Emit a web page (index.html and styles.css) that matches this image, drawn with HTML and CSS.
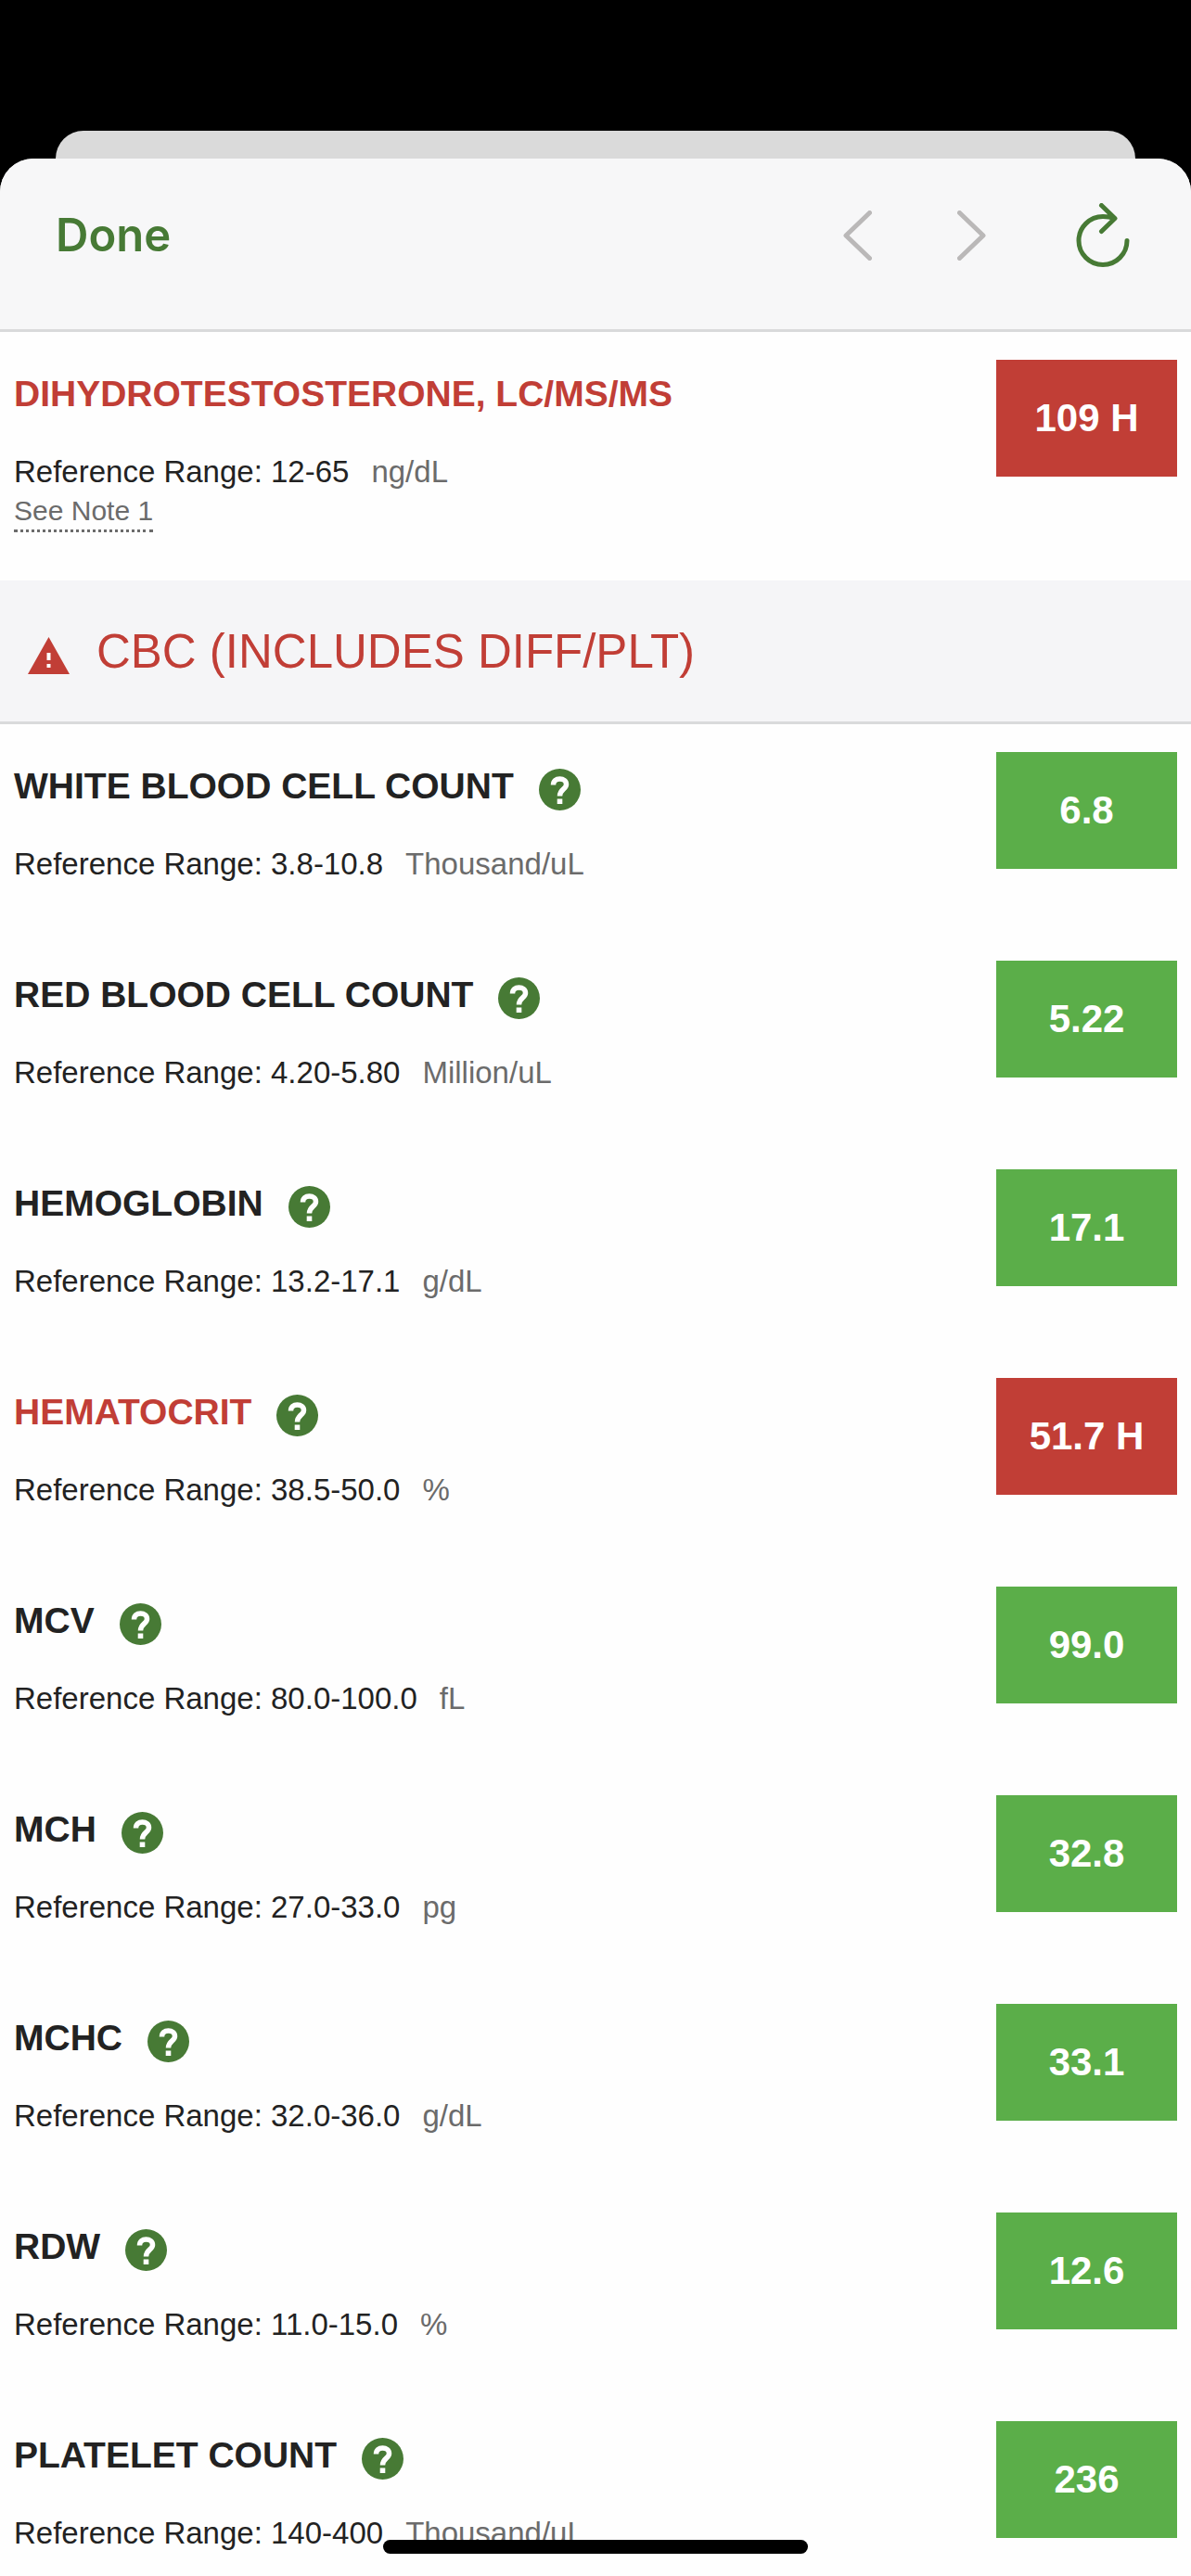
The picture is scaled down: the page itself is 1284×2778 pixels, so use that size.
FILE: index.html
```html
<!DOCTYPE html>
<html lang="en">
<head>
<meta charset="utf-8">
<meta name="viewport" content="width=device-width, initial-scale=1">
<title>Lab Results</title>
<link rel="stylesheet" href="styles.css">
</head>
<body>
<svg hidden>
  <symbol id="help" viewBox="0 0 45 45">
    <circle cx="22.5" cy="22.5" r="22.5" fill="#477a35"/>
    <path d="M15.500 17.500C15.500 13 18.500 11 22.500 11C26.500 11 29.500 13.300 29.500 17C29.500 22 22.500 22 22.500 29.500" fill="none" stroke="#fff" stroke-width="5.500"/>
    <rect x="19.700" y="32.500" width="5.600" height="5.500" fill="#fff"/>
  </symbol>
</svg>
<div class="backdrop"></div>
<div class="sheet">
  <header class="toolbar">
    <button class="done" type="button">Done</button>
    <nav class="controls" aria-label="Browser">
      <button class="control" type="button" aria-label="Back" disabled>
        <svg width="31" height="54" viewBox="0 0 31 54"><path d="M28.500 2.500L3 27L28.500 51.500"/></svg>
      </button>
      <button class="control" type="button" aria-label="Forward" disabled>
        <svg width="31" height="54" viewBox="0 0 31 54"><path d="M2.500 2.500L28 27L2.500 51.500"/></svg>
      </button>
      <button class="control reload" type="button" aria-label="Reload">
        <svg width="63" height="70" viewBox="-6 0 63 70"><path d="M54 40.500A26 26 0 1 1 28 14.500Q35 14.500 40 16.500M26.500 2.500L41 16.500L26.500 30.500"/></svg>
      </button>
    </nav>
  </header>
  <main class="results">
    <ul class="list">
      <li class="row high">
        <div class="info">
          <h3 class="name">DIHYDROTESTOSTERONE, LC/MS/MS</h3>
          <p class="range">Reference Range: 12-65<span class="unit">ng/dL</span></p>
          <a class="note" href="#note-1">See Note 1</a>
        </div>
        <strong class="value">109 H</strong>
      </li>
    </ul>
    <h2 class="section">
      <svg class="alert" width="45" height="40" viewBox="0 0 45 40"><path d="M22.500 0L45 40H0Z" fill="#c13e36"/><path d="M20.500 17h4v8h-4zM20.500 29h4v4h-4z" fill="#fff"/></svg>
      CBC (INCLUDES DIFF/PLT)
    </h2>
    <ul class="list">
      <li class="row">
        <div class="info">
          <h3 class="name">WHITE BLOOD CELL COUNT<button class="help" type="button" aria-label="About white blood cell count"><svg><use href="#help"/></svg></button></h3>
          <p class="range">Reference Range: 3.8-10.8<span class="unit">Thousand/uL</span></p>
        </div>
        <strong class="value">6.8</strong>
      </li>
      <li class="row">
        <div class="info">
          <h3 class="name">RED BLOOD CELL COUNT<button class="help" type="button" aria-label="About red blood cell count"><svg><use href="#help"/></svg></button></h3>
          <p class="range">Reference Range: 4.20-5.80<span class="unit">Million/uL</span></p>
        </div>
        <strong class="value">5.22</strong>
      </li>
      <li class="row">
        <div class="info">
          <h3 class="name">HEMOGLOBIN<button class="help" type="button" aria-label="About hemoglobin"><svg><use href="#help"/></svg></button></h3>
          <p class="range">Reference Range: 13.2-17.1<span class="unit">g/dL</span></p>
        </div>
        <strong class="value">17.1</strong>
      </li>
      <li class="row high">
        <div class="info">
          <h3 class="name">HEMATOCRIT<button class="help" type="button" aria-label="About hematocrit"><svg><use href="#help"/></svg></button></h3>
          <p class="range">Reference Range: 38.5-50.0<span class="unit">%</span></p>
        </div>
        <strong class="value">51.7 H</strong>
      </li>
      <li class="row">
        <div class="info">
          <h3 class="name">MCV<button class="help" type="button" aria-label="About MCV"><svg><use href="#help"/></svg></button></h3>
          <p class="range">Reference Range: 80.0-100.0<span class="unit">fL</span></p>
        </div>
        <strong class="value">99.0</strong>
      </li>
      <li class="row">
        <div class="info">
          <h3 class="name">MCH<button class="help" type="button" aria-label="About MCH"><svg><use href="#help"/></svg></button></h3>
          <p class="range">Reference Range: 27.0-33.0<span class="unit">pg</span></p>
        </div>
        <strong class="value">32.8</strong>
      </li>
      <li class="row">
        <div class="info">
          <h3 class="name">MCHC<button class="help" type="button" aria-label="About MCHC"><svg><use href="#help"/></svg></button></h3>
          <p class="range">Reference Range: 32.0-36.0<span class="unit">g/dL</span></p>
        </div>
        <strong class="value">33.1</strong>
      </li>
      <li class="row">
        <div class="info">
          <h3 class="name">RDW<button class="help" type="button" aria-label="About RDW"><svg><use href="#help"/></svg></button></h3>
          <p class="range">Reference Range: 11.0-15.0<span class="unit">%</span></p>
        </div>
        <strong class="value">12.6</strong>
      </li>
      <li class="row">
        <div class="info">
          <h3 class="name">PLATELET COUNT<button class="help" type="button" aria-label="About platelet count"><svg><use href="#help"/></svg></button></h3>
          <p class="range">Reference Range: 140-400<span class="unit">Thousand/uL</span></p>
        </div>
        <strong class="value">236</strong>
      </li>
    </ul>
  </main>
</div>
<div class="home-indicator"></div>
</body>
</html>
```
FILE: styles.css
```css
* {
  box-sizing: border-box;
}

body {
  display: flex;
  flex-direction: column;
  height: 100vh;
  margin: 0;
  padding-top: 141px;
  overflow: hidden;
  background: #000;
  color: #222;
  font-family: "Liberation Sans", Arial, sans-serif;
}

h2,
h3,
p,
ul {
  margin: 0;
  padding: 0;
}

button {
  padding: 0;
  border: 0;
  background: none;
}

svg {
  display: block;
}

svg[hidden] {
  display: none;
}

/* Edge of the page that sits behind the sheet */
.backdrop {
  flex: none;
  height: 30px;
  margin: 0 60px;
  border-radius: 30px 30px 0 0;
  background: #dadada;
}

.sheet {
  display: flex;
  flex: 1;
  flex-direction: column;
  min-height: 0;
  overflow: hidden;
  border-radius: 36px 36px 0 0;
  background: #fefefe;
}

.toolbar {
  display: flex;
  flex: none;
  align-items: center;
  justify-content: space-between;
  padding: 47px 66px 65px 60px;
  border-bottom: 3px solid #d9dadb;
  background: #f7f7f8;
}

.done {
  color: #477a35;
  font: 600 49px/72px Inter, "Liberation Sans", sans-serif;
}

.controls {
  display: flex;
  align-items: center;
  gap: 92px;
}

.control path {
  fill: none;
  stroke: #bab8b8;
  stroke-width: 5;
  stroke-linecap: round;
  stroke-linejoin: round;
}

.reload path {
  stroke: #477a35;
}

.results {
  flex: 1;
  min-height: 0;
  overflow-y: auto;
  scrollbar-width: none;
}

.list {
  list-style: none;
}

.row {
  display: flex;
  align-items: flex-start;
  justify-content: space-between;
  padding: 30px 15px 52px;
}

.info {
  padding-top: 10px;
}

.name {
  display: flex;
  align-items: center;
  gap: 27px;
  margin-bottom: 34px;
  font-size: 39px;
  line-height: 54px;
}

.high .name {
  color: #c13e36;
}

.help {
  padding-top: 6px;
}

.help svg {
  width: 45px;
  height: 45px;
}

.range {
  font-size: 33px;
  line-height: 45px;
}

.unit {
  margin-left: 24px;
  color: #6b6b6b;
}

.note {
  display: block;
  width: fit-content;
  border-bottom: 3px dotted #6b6b6b;
  color: #6b6b6b;
  font-size: 30px;
  line-height: 40px;
  text-decoration: none;
}

.value {
  width: 195px;
  background: #5bae49;
  color: #fff;
  font-size: 42px;
  line-height: 126px;
  text-align: center;
}

.high .value {
  background: #c13e36;
}

.section {
  display: flex;
  align-items: center;
  gap: 29px;
  padding: 44px 30px 42px;
  border-bottom: 3px solid #d9dadb;
  background: #f5f5f7;
  color: #c13e36;
  font-size: 51px;
  font-weight: 400;
  line-height: 66px;
}

.alert {
  margin-top: 8px;
}

.home-indicator {
  position: fixed;
  bottom: 24px;
  left: 50%;
  width: 458px;
  height: 15px;
  border-radius: 8px;
  background: #000;
  transform: translateX(-50%);
}
```
